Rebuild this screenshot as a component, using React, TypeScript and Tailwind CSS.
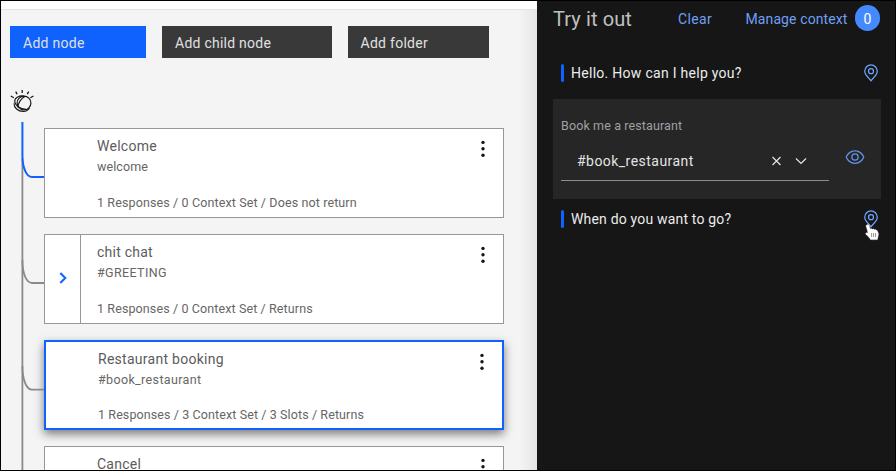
import type { ReactNode } from "react";

function WatsonIcon() {
  return (
    <svg className="ml-[9px] mt-[31px] block shrink-0" width="24" height="24" viewBox="0 0 24 24" fill="none" stroke="#161616">
      <path d="M12.2 1.1v2.8M5.700 2.600l1.400 2.500M18.700 2.600l-1.400 2.500M0.800 7l3 1.700M23.400 7l-3 1.700" strokeWidth="1.3" />
      <circle cx="14" cy="14" r="6.9" strokeWidth="1.2" />
      <path d="M14 7.100C9.500 6.100 4.600 8.500 4.700 12.300c.1 3.900 5.300 7.700 11.300 8" strokeWidth="1.1" />
      <path d="M15.200 7.200C11 9.500 7.800 14.200 7.900 18.600M4 14.200c-.1 4.500 3.800 8.200 9.200 8.200 3 0 5.200-1.400 6.300-3.400" strokeWidth="1.1" />
    </svg>
  );
}

function Branches() {
  return (
    <svg className="absolute left-[20px] top-[121px]" width="24" height="349" viewBox="0 0 24 349" fill="none" strokeWidth="1.8">
      <g stroke="#8a8a8a">
        <path d="M1.4 36V349" />
        <path d="M1.4 138C1.4 152 5.5 161 11 161H23" />
        <path d="M1.4 244C1.4 258 5.5 267.6 11 267.6H23" />
      </g>
      <path d="M1.4 0V33C1.4 46 5.5 55 11 55H23" stroke="#0f62fe" strokeWidth="2" />
    </svg>
  );
}

function Kebab({ className }: { className: string }) {
  return (
    <svg className={className} width="4" height="17" viewBox="0 0 4 17" fill="#161616">
      <circle cx="2" cy="2.4" r="1.7" />
      <circle cx="2" cy="8.8" r="1.7" />
      <circle cx="2" cy="15.2" r="1.7" />
    </svg>
  );
}

function Pin() {
  return (
    <svg className="shrink-0" width="20" height="20" viewBox="0 0 32 32" fill="#6ea6ff">
      <path d="M16,18a5,5,0,1,1,5-5A5.0057,5.0057,0,0,1,16,18Zm0-8a3,3,0,1,0,3,3A3.0033,3.0033,0,0,0,16,10Z" />
      <path d="M16,30,7.5645,20.0513c-.0479-.0571-.3482-.4515-.3482-.4515A10.8888,10.8888,0,0,1,5,13a11,11,0,0,1,22,0,10.8844,10.8844,0,0,1-2.2148,6.5973l-.0015.0025s-.3.3944-.3447.4474ZM8.8125,18.395c.001.0007.2334.3082.2866.3744L16,26.9079l6.91-8.15c.0439-.0552.2783-.3649.2788-.3657A8.901,8.901,0,0,0,25,13,9,9,0,1,0,7,13a8.9054,8.9054,0,0,0,1.8125,5.395Z" />
    </svg>
  );
}

function Eye() {
  return (
    <svg width="20" height="20" viewBox="0 0 32 32" fill="#6296f0">
      <path d="M30.94,15.66A16.69,16.69,0,0,0,16,5,16.69,16.69,0,0,0,1.06,15.66a1,1,0,0,0,0,.68A16.69,16.69,0,0,0,16,27,16.69,16.69,0,0,0,30.94,16.34,1,1,0,0,0,30.94,15.66ZM16,25c-5.3,0-10.9-3.93-12.93-9C5.1,10.93,10.7,7,16,7s10.9,3.93,12.93,9C26.9,21.07,21.3,25,16,25Z" />
      <path d="M16,10a6,6,0,1,0,6,6A6,6,0,0,0,16,10Zm0,10a4,4,0,1,1,4-4A4,4,0,0,1,16,20Z" />
    </svg>
  );
}

function HandCursor() {
  return (
    <svg className="absolute left-[4px] top-[15px]" width="15" height="17" viewBox="0 0 15 17">
      <path
        d="M2.1.8C3 .4 3.8.9 4.1 1.7L5.3 5.2C6 4.6 7 4.7 7.4 5.4 8.2 4.9 9.2 5 9.6 5.9 10.5 5.5 11.7 5.8 12.1 6.7 13.2 8.6 13.7 10 13.1 12L12.3 15.6H5.6C4.8 13.8 3.4 12.5 1.6 11 .8 10.3.6 9.4 1.2 9 2 8.5 2.7 8.9 3.3 9.4L1.3 2.4C1.1 1.7 1.3 1.1 2.1.8Z"
        fill="#fff"
        stroke="#fff"
        strokeWidth=".5"
      />
      <path d="M6.6 9v4M8.6 9v4M10.6 9v4" stroke="#777" strokeWidth=".8" />
    </svg>
  );
}

type NodeProps = {
  title: ReactNode;
  condition?: ReactNode;
  summary?: ReactNode;
  folder?: boolean;
};

function NodeCard({ title, condition, summary, folder }: NodeProps) {
  return (
    <div className="flex h-[90px] w-[460px] shrink-0 border border-[#979797] bg-white">
      <div className={`flex w-9 shrink-0 items-center justify-center ${folder ? "border-r border-[#979797]" : ""}`}>
        {folder && (
          <svg className="mb-[2px]" width="8" height="12" viewBox="0 0 8 12" fill="none" stroke="#0f62fe" strokeWidth="2">
            <path d="M1.3 1 6.3 6l-5 5" />
          </svg>
        )}
      </div>
      <div className="flex flex-1 flex-col pl-4 pt-[7px]">
        <h3 className="text-sm leading-5 text-[#5c5c5c]">{title}</h3>
        <p className="mt-[3px] text-[12.5px] leading-4">{condition}</p>
        <p className="mt-5 text-[12.5px] leading-4">{summary}</p>
      </div>
      <Kebab className="mr-[18px] mt-[11px]" />
    </div>
  );
}

function Message({ children, pin }: { children: ReactNode; pin: ReactNode }) {
  return (
    <div className="flex h-5 items-center pl-6 pr-[14px]">
      <span className="h-[18px] w-[3px] rounded-sm bg-[#0f62fe]" />
      <p className="ml-[7px] flex-1 text-sm leading-5 text-[#ececec]">{children}</p>
      {pin}
    </div>
  );
}

export default function App() {
  return (
    <div className="flex h-[471px] w-[896px] overflow-hidden border border-black bg-[#161616] font-['Roboto','Liberation_Sans',sans-serif] whitespace-nowrap">
      <main className="relative flex w-[536px] shrink-0 flex-col overflow-hidden bg-[#f4f4f4] text-[#666]">
        <div className="h-[9px] shrink-0 border-b border-[#e4e4e4] bg-white" />
        <div className="mt-4 flex shrink-0 gap-4 pl-[9px] text-sm leading-5 text-[#e0e0e0]">
          <button className="flex h-8 w-[136px] items-center bg-[#0f62fe] pl-[13px] pt-px tracking-[0.28px]">Add node</button>
          <button className="flex h-8 w-[169.5px] items-center bg-[#393939] pl-[13px] pt-px tracking-[0.25px]">Add child node</button>
          <button className="flex h-8 w-[141.5px] items-center bg-[#393939] pl-[13px] pt-px tracking-[0.28px]">Add folder</button>
        </div>
        <WatsonIcon />
        <div className="mt-[15px] flex flex-col gap-4 pl-[43px]">
          <NodeCard
            title={<span className="tracking-[0.26px]">Welcome</span>}
            condition={<span className="tracking-[0.08px]">welcome</span>}
            summary={<span className="tracking-[0.12px]">1 Responses / 0 Context Set / Does not return</span>}
          />
          <NodeCard
            folder
            title={<span className="tracking-[0.24px]">chit chat</span>}
            condition={<span className="tracking-[0.37px]">#GREETING</span>}
            summary={<span className="tracking-[0.11px]">1 Responses / 0 Context Set / Returns</span>}
          />
          <div className="flex h-[90px] w-[460px] shrink-0 border-2 border-[#0f62fe] bg-white shadow-[0_4px_9px_rgba(0,0,0,0.5)]">
            <div className="flex flex-1 flex-col pl-[52px] pt-[7px]">
              <h3 className="text-sm leading-5 tracking-[0.27px] text-[#5c5c5c]">Restaurant booking</h3>
              <p className="mt-[3px] text-[12.5px] leading-4 tracking-[0.36px]">#book_restaurant</p>
              <p className="mt-[19px] text-[12.5px] leading-4 tracking-[0.1px]">1 Responses / 3 Context Set / 3 Slots / Returns</p>
            </div>
            <Kebab className="mr-[18px] mt-[11px]" />
          </div>
          <NodeCard title={<span className="tracking-[0.24px]">Cancel</span>} />
        </div>
        <Branches />
        <div className="absolute bottom-0 right-0 top-[9px] w-[18px] bg-gradient-to-r from-black/0 to-black/[0.06]" />
      </main>

      <aside className="flex flex-1 flex-col bg-[#161616]">
        <header className="mt-[4px] flex h-[26px] items-center pl-4 pr-[15px]">
          <h2 className="mt-px text-xl leading-6 tracking-[0.1px] text-[#c0c0c0]">Try it out</h2>
          <button className="ml-[46px] mt-[2px] text-sm leading-5 tracking-[0.35px] text-[#6f9ff5]">Clear</button>
          <button className="ml-[33.5px] mt-[2px] text-sm leading-5 tracking-[0.11px] text-[#6f9ff5]">Manage context</button>
          <span className="ml-auto flex h-[26px] w-[25px] items-center justify-center rounded-full bg-[#4589ff] pt-[2px] text-sm text-white">0</span>
        </header>
        <div className="mt-8">
          <Message pin={<Pin />}>
            <span className="tracking-[0.28px]">Hello. How can I help you?</span>
          </Message>
        </div>
        <section className="ml-4 mt-4 flex h-[100px] w-[328px] bg-[#262626] pl-2">
          <div className="w-[268px]">
            <p className="mt-[19px] text-[12.5px] leading-4 tracking-[0.12px] text-[#a0a0a0]">Book me a restaurant</p>
            <div className="mt-[8px] flex h-[39px] items-center border-b border-[#8d8d8d] pl-4 pr-[22px] text-[#e4e4e4]">
              <span className="flex-1 text-sm leading-5 tracking-[0.46px]">#book_restaurant</span>
              <svg width="10" height="10" viewBox="0 0 10 10" fill="none" stroke="currentColor" strokeWidth="1.2">
                <path d="m1.5 1 8 8M9.5 1l-8 8" />
              </svg>
              <svg className="ml-[14px]" width="12" height="10" viewBox="0 0 12 10" fill="none" stroke="currentColor" strokeWidth="1.2">
                <path d="m1 2.5 5 5 5-5" />
              </svg>
            </div>
          </div>
          <div className="ml-4 mt-12">
            <Eye />
          </div>
        </section>
        <div className="mt-[10px]">
          <Message
            pin={
              <div className="relative h-5 w-5">
                <Pin />
                <HandCursor />
              </div>
            }
          >
            <span className="tracking-[0.18px]">When do you want to go?</span>
          </Message>
        </div>
      </aside>
    </div>
  );
}
